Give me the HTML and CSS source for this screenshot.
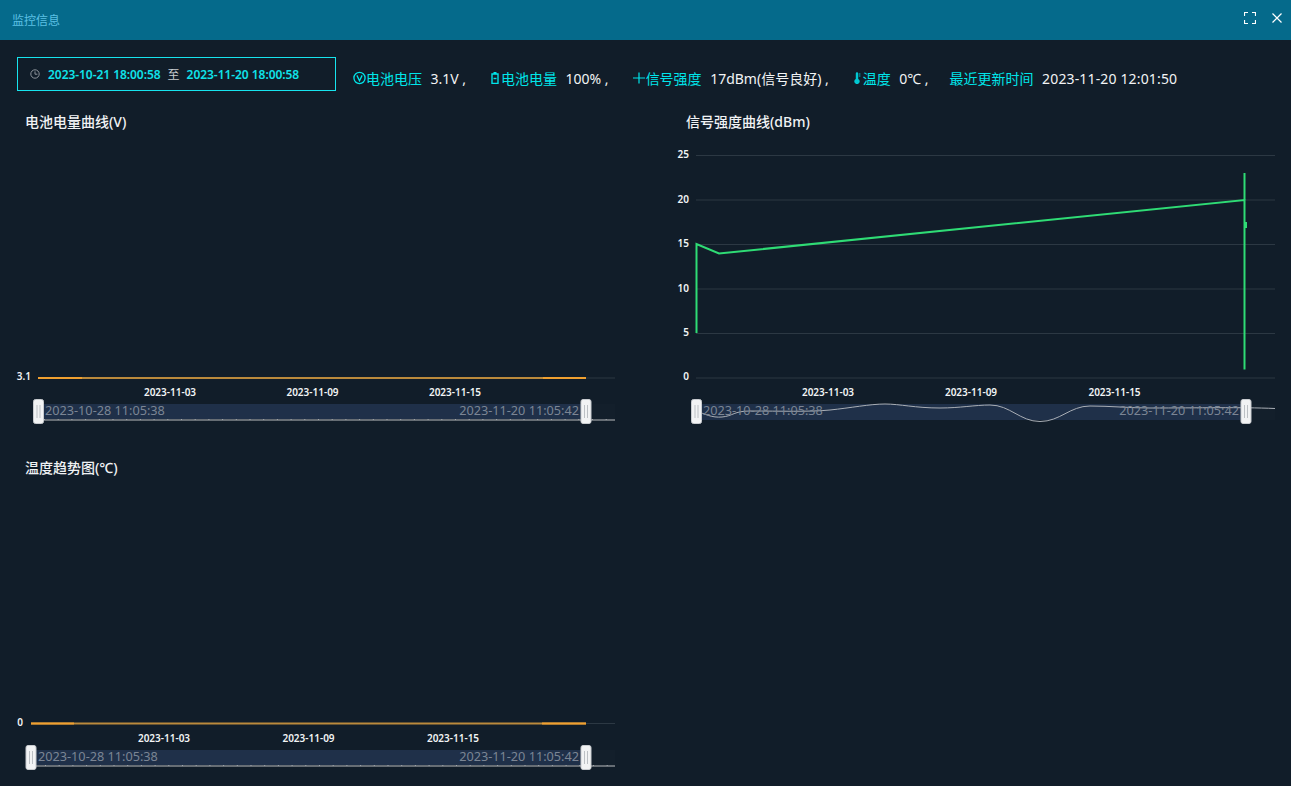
FILE: index.html
```html
<!DOCTYPE html>
<html lang="zh">
<head>
    <meta charset="UTF-8">
    <title>监控信息</title>
    <link rel="stylesheet" href="styles.css">
</head>
<body>

<div class="header">
    <span class="header-title">监控信息</span>
    <div class="header-tools">
        <svg width="12" height="12" viewBox="0 0 12 12"><path d="M0.5 4V0.5H4M8 0.5H11.5V4M11.5 8V11.5H8M4 11.5H0.5V8" fill="none" stroke="#fff" stroke-width="1.2"/></svg>
        <svg width="10" height="10" viewBox="0 0 10 10"><path d="M0.5 0.5L9.5 9.5M9.5 0.5L0.5 9.5" fill="none" stroke="#fff" stroke-width="1.2"/></svg>
    </div>
</div>

<div class="toolbar">
    <div class="date-box">
        <svg class="clock" width="10" height="10" viewBox="0 0 10 10"><circle cx="5" cy="5" r="4.2" fill="none" stroke="#8d939a" stroke-width="1"/><path d="M5 2.4V5.2H7.4" fill="none" stroke="#8d939a" stroke-width="1"/></svg>
        <span class="date">2023-10-21 18:00:58</span>
        <span class="date-sep">至</span>
        <span class="date">2023-11-20 18:00:58</span>
    </div>
    <div class="status-list">
        <div class="status">
            <svg class="icon" width="13" height="14" viewBox="0 0 14 14"><circle cx="7" cy="7" r="6" fill="none" stroke="#00e5ea" stroke-width="1.4"/><path d="M4.200 4.200L7 10L9.800 4.200" fill="none" stroke="#00e5ea" stroke-width="1.4"/></svg>
            <span class="label">电池电压</span><span class="value">3.1V ,</span>
        </div>
        <div class="status">
            <svg class="icon icon-batt" width="8" height="12" viewBox="0 0 8 12"><path d="M2.5 0.6H5.5M1 2H7V11.4H1Z" fill="none" stroke="#00e5ea" stroke-width="1.4"/><path d="M2.5 6.5H5.5" stroke="#00e5ea" stroke-width="1.4"/></svg>
            <span class="label">电池电量</span><span class="value">100% ,</span>
        </div>
        <div class="status">
            <svg class="icon" width="14" height="12" viewBox="0 0 14 12"><path d="M1 6H13M7 0.5V11.5" fill="none" stroke="#00e5ea" stroke-width="1.2"/></svg>
            <span class="label">信号强度</span><span class="value">17dBm(信号良好) ,</span>
        </div>
        <div class="status">
            <svg class="icon icon-temp" width="8" height="12" viewBox="0 0 8 12"><path d="M2.8 1.4a1.2 1.2 0 0 1 2.4 0V7a2.7 2.7 0 1 1-2.4 0Z" fill="#00c8d2"/><path d="M5.8 2H7.4M5.8 4H7.4" stroke="#00c8d2"/></svg>
            <span class="label">温度</span><span class="value">0℃ ,</span>
        </div>
        <div class="status status-time">
            <span class="label">最近更新时间</span><span class="value">2023-11-20 12:01:50</span>
        </div>
    </div>
</div>

<div class="charts">
    <div class="chart">
        <div class="chart-title">电池电量曲线(V)</div>
        <svg class="plot" width="645" height="346" viewBox="0 105 645 346">
            <line class="grid" x1="38" y1="378" x2="615" y2="378"/>
            <line class="series-back" x1="38" y1="378" x2="586" y2="378"/>
            <line class="series" x1="38" y1="378" x2="82" y2="378"/>
            <line class="series" x1="543" y1="378" x2="586" y2="378"/>
            <text class="tick" x="31" y="380" text-anchor="end">3.1</text>
            <text class="tick" x="170" y="396" text-anchor="middle">2023-11-03</text>
            <text class="tick" x="312.500" y="396" text-anchor="middle">2023-11-09</text>
            <text class="tick" x="455" y="396" text-anchor="middle">2023-11-15</text>
            <rect class="slider-bg" x="38" y="404" width="577" height="16"/>
            <rect class="slider-fill" x="38" y="404" width="548" height="16"/>
            <line class="slider-line" x1="38" y1="420" x2="615" y2="420"/>
            <line class="slider-ticks" x1="44" y1="419.500" x2="615" y2="419.500"/>
            <text class="slider-text" x="45" y="415">2023-10-28 11:05:38</text>
            <text class="slider-text" x="579" y="415" text-anchor="end">2023-11-20 11:05:42</text>
            <g class="handle"><rect x="33.500" y="399.500" width="10" height="24" rx="2"/><path d="M37 405v13M40 405v13"/></g>
            <g class="handle"><rect x="581" y="399.500" width="10" height="24" rx="2"/><path d="M584.500 405v13M587.500 405v13"/></g>
        </svg>
    </div>

    <div class="chart chart-right">
        <div class="chart-title">信号强度曲线(dBm)</div>
        <svg class="plot" width="646" height="346" viewBox="645 105 646 346">
            <line class="grid" x1="696" y1="155.500" x2="1275" y2="155.500"/>
            <line class="grid" x1="696" y1="200" x2="1275" y2="200"/>
            <line class="grid" x1="696" y1="244.500" x2="1275" y2="244.500"/>
            <line class="grid" x1="696" y1="289" x2="1275" y2="289"/>
            <line class="grid" x1="696" y1="333.500" x2="1275" y2="333.500"/>
            <line class="grid" x1="696" y1="378" x2="1275" y2="378"/>
            <text class="tick" x="689" y="158" text-anchor="end">25</text>
            <text class="tick" x="689" y="203" text-anchor="end">20</text>
            <text class="tick" x="689" y="247" text-anchor="end">15</text>
            <text class="tick" x="689" y="292" text-anchor="end">10</text>
            <text class="tick" x="689" y="336" text-anchor="end">5</text>
            <text class="tick" x="689" y="380" text-anchor="end">0</text>
            <text class="tick" x="828" y="396" text-anchor="middle">2023-11-03</text>
            <text class="tick" x="971" y="396" text-anchor="middle">2023-11-09</text>
            <text class="tick" x="1114.500" y="396" text-anchor="middle">2023-11-15</text>
            <path class="signal" d="M696.500 333V244L719 253.500L1244.500 200V369.500V173"/>
            <path class="signal" d="M1246 222V228" stroke-width="1"/>
            <rect class="slider-bg" x="696" y="404" width="579" height="16"/>
            <rect class="slider-fill" x="696" y="404" width="550" height="16"/>
            <path class="slider-curve" d="M696 411C705 414 712 418 722 417C733 416 734 411 750 411C780 411 810 412 830 410C850 408 870 404 885 404C900 404 915 408 940 408C960 408 975 405 990 405C1010 405 1020 421.500 1040 421.500C1060 421.500 1070 406 1090 406C1110 406 1130 408 1150 408C1200 408 1240 407 1275 408.500"/>
            <text class="slider-text" x="703" y="415">2023-10-28 11:05:38</text>
            <text class="slider-text" x="1239" y="415" text-anchor="end">2023-11-20 11:05:42</text>
            <g class="handle"><rect x="691.500" y="399.500" width="10" height="24" rx="2"/><path d="M695 405v13M698 405v13"/></g>
            <g class="handle"><rect x="1241" y="399.500" width="10" height="24" rx="2"/><path d="M1244.500 405v13M1247.500 405v13"/></g>
        </svg>
    </div>

    <div class="chart">
        <div class="chart-title">温度趋势图(℃)</div>
        <svg class="plot" width="645" height="335" viewBox="0 451 645 335">
            <line class="grid" x1="31" y1="723.500" x2="615" y2="723.500"/>
            <line class="series-back" x1="31" y1="723.500" x2="586" y2="723.500"/>
            <line class="series" x1="31" y1="723.500" x2="74" y2="723.500"/>
            <line class="series" x1="542" y1="723.500" x2="586" y2="723.500"/>
            <text class="tick" x="23" y="726" text-anchor="end">0</text>
            <text class="tick" x="164" y="742" text-anchor="middle">2023-11-03</text>
            <text class="tick" x="308.500" y="742" text-anchor="middle">2023-11-09</text>
            <text class="tick" x="453" y="742" text-anchor="middle">2023-11-15</text>
            <rect class="slider-bg" x="31" y="750" width="584" height="16"/>
            <rect class="slider-fill" x="31" y="750" width="555" height="16"/>
            <line class="slider-line" x1="31" y1="766" x2="615" y2="766"/>
            <line class="slider-ticks" x1="45" y1="765.500" x2="615" y2="765.500"/>
            <text class="slider-text" x="38" y="761">2023-10-28 11:05:38</text>
            <text class="slider-text" x="579" y="761" text-anchor="end">2023-11-20 11:05:42</text>
            <g class="handle"><rect x="26" y="745.500" width="10" height="24" rx="2"/><path d="M29.500 751v13M32.500 751v13"/></g>
            <g class="handle"><rect x="581" y="745.500" width="10" height="24" rx="2"/><path d="M584.500 751v13M587.500 751v13"/></g>
        </svg>
    </div>
</div>

</body>
</html>
```

FILE: styles.css
```css
html, body {
    margin: 0;
    padding: 0;
    height: 100%;
    overflow: hidden;
    background-color: #111d29;
    font-family: "Noto Sans", "Noto Sans CJK SC", sans-serif;
    color: #fff;
}

.header {
    height: 40px;
    background-color: #056a8b;
    display: flex;
    align-items: center;
    justify-content: space-between;
    padding: 0 9px 4px 12px;
    box-sizing: border-box;
}

.header-title {
    font-size: 12px;
    color: #5cc0e4;
    margin-top: 3px;
}

.header-tools {
    display: flex;
    align-items: center;
    gap: 16px;
}

.toolbar {
    display: flex;
    align-items: flex-start;
    height: 65px;
    padding: 17px 0 0 17px;
    box-sizing: border-box;
}

.date-box {
    width: 319px;
    height: 34px;
    box-sizing: border-box;
    border: 1px solid #17e4ee;
    display: flex;
    align-items: center;
    padding: 0 0 0 12px;
    font-size: 12px;
    font-weight: 600;
}

.clock {
    margin-right: 8px;
}

.date {
    color: #0fe3ea;
    letter-spacing: -0.05px;
}

.date-sep {
    color: #c8ccd0;
    font-weight: normal;
    margin: 0 7px;
}

.status-list {
    display: flex;
    align-items: center;
    height: 34px;
    margin-left: 17px;
    margin-top: 4px;
    gap: 23px;
    font-size: 14px;
}

.status {
    display: flex;
    align-items: center;
}

.status-time {
    margin-left: -2px;
}

.status-time .value {
    letter-spacing: 0.15px;
}

.icon-batt {
    margin: 0 2px;
}

.icon-temp {
    margin: 0 2px 0 1px;
}

.label {
    color: #00e5ea;
}

.value {
    margin-left: 8.5px;
    color: #f2f4f5;
}

.charts {
    display: grid;
    grid-template-columns: 645px 646px;
    grid-template-rows: 346px 335px;
}

.chart {
    position: relative;
}

.chart-title {
    position: absolute;
    left: 25px;
    top: 9px;
    font-size: 14px;
    font-weight: 500;
    color: #f0f2f4;
    line-height: 16px;
}

.chart-right .chart-title {
    left: 41px;
}

.plot {
    display: block;
}

.grid {
    stroke: #2c3843;
    stroke-width: 1;
}

.series-back {
    stroke: #bb8a3c;
    stroke-width: 2;
}

.series {
    stroke: #f0a030;
    stroke-width: 2;
}

.signal {
    fill: none;
    stroke: #2fdc75;
    stroke-width: 2;
}

.tick {
    font-size: 10px;
    font-weight: 600;
    fill: #f2f4f5;
}

.slider-bg {
    fill: #131f2b;
}

.slider-fill {
    fill: #1f3049;
}

.slider-line {
    stroke: #666d74;
    stroke-width: 2;
}

.slider-ticks {
    stroke: #a2a7ac;
    stroke-width: 1;
    stroke-dasharray: 1 12.700;
    fill: none;
}

.slider-curve {
    fill: none;
    stroke: #a9aeb5;
    stroke-width: 1;
}

.slider-text {
    font-size: 12.700px;
    fill: #7b8594;
}

.handle rect {
    fill: #f2f3f4;
    stroke: #c8cbcf;
    stroke-width: 1;
}

.handle path {
    stroke: #bcc0c4;
    stroke-width: 1;
    fill: none;
}
```
